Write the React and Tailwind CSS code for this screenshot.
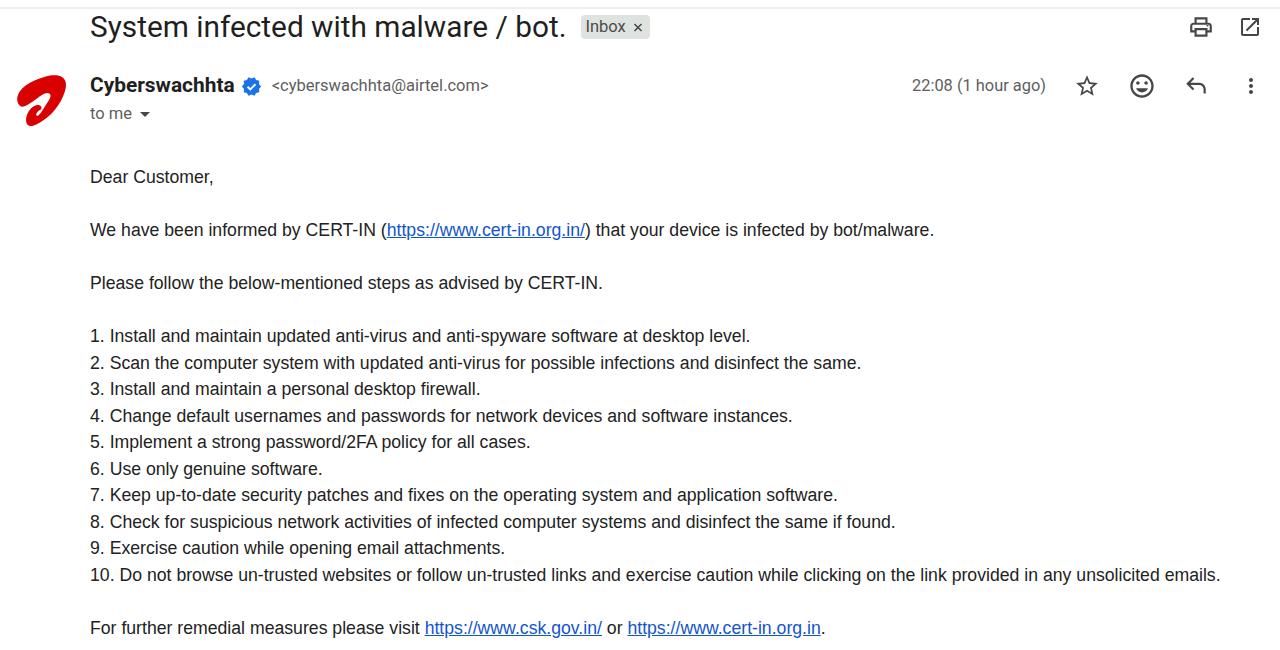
import React from "react";

const STEPS = [
  "1. Install and maintain updated anti-virus and anti-spyware software at desktop level.",
  "2. Scan the computer system with updated anti-virus for possible infections and disinfect the same.",
  "3. Install and maintain a personal desktop firewall.",
  "4. Change default usernames and passwords for network devices and software instances.",
  "5. Implement a strong password/2FA policy for all cases.",
  "6. Use only genuine software.",
  "7. Keep up-to-date security patches and fixes on the operating system and application software.",
  "8. Check for suspicious network activities of infected computer systems and disinfect the same if found.",
  "9. Exercise caution while opening email attachments.",
  "10. Do not browse un-trusted websites or follow un-trusted links and exercise caution while clicking on the link provided in any unsolicited emails.",
];

// material icon paths, same ones gmail draws
const ICONS = {
  print:
    "M19 8h-1V3H6v5H5c-1.66 0-3 1.34-3 3v6h4v4h12v-4h4v-6c0-1.66-1.34-3-3-3zM8 5h8v3H8V5zm8 14H8v-4h8v4zm4-4h-2v-2H6v2H4v-4c0-.55.45-1 1-1h14c.55 0 1 .45 1 1v4zm-2-3.500a1 1 0 1 1 0-2 1 1 0 0 1 0 2z",
  open: "M19 19H5V5h7V3H5c-1.11 0-2 .9-2 2v14c0 1.1.89 2 2 2h14c1.1 0 2-.9 2-2v-7h-2v7zM14 3v2h3.590l-9.830 9.830 1.410 1.410L19 6.410V10h2V3h-7z",
  star: "M22 9.240l-7.190-.62L12 2 9.190 8.630 2 9.240l5.460 4.730L5.820 21 12 17.270 18.180 21l-1.630-7.030L22 9.240zM12 15.400l-3.760 2.270 1-4.280-3.320-2.880 4.380-.38L12 6.100l1.710 4.040 4.380.38-3.320 2.880 1 4.280L12 15.400z",
  mood: "M11.990 2C6.470 2 2 6.480 2 12s4.470 10 9.990 10C17.520 22 22 17.520 22 12S17.520 2 11.990 2zM12 20c-4.420 0-8-3.580-8-8s3.580-8 8-8 8 3.580 8 8-3.580 8-8 8zm3.500-9c.83 0 1.500-.67 1.500-1.500S16.330 8 15.500 8 14 8.670 14 9.500s.67 1.500 1.500 1.500zm-7 0c.83 0 1.500-.67 1.500-1.500S9.330 8 8.500 8 7 8.670 7 9.500 7.670 11 8.500 11zm3.500 6.500c2.330 0 4.310-1.460 5.110-3.500H6.890c.8 2.040 2.780 3.500 5.110 3.500z",
  reply: "M21 19v-4c0-3.310-2.690-6-6-6H6.830l3.590-3.590L9 4 3 10l6 6 1.410-1.410L6.830 11H15c2.210 0 4 1.790 4 4v4h2z",
  more: "M12 8c1.100 0 2-.9 2-2s-.9-2-2-2-2 .9-2 2 .9 2 2 2zm0 2c-1.100 0-2 .9-2 2s.9 2 2 2 2-.9 2-2-.9-2-2-2zm0 6c-1.100 0-2 .9-2 2s.9 2 2 2 2-.9 2-2-.9-2-2-2z",
};

function Icon({ name, size = 24 }) {
  return (
    <svg width={size} height={size} viewBox="0 0 24 24" fill="currentColor">
      <path d={ICONS[name]} />
    </svg>
  );
}

function VerifiedBadge() {
  return (
    <svg width="21" height="21" viewBox="0 0 24 24">
      <path
        d="M23 12l-2.440-2.790.34-3.690-3.610-.82-1.890-3.200L12 2.960 8.600 1.500 6.710 4.690 3.100 5.500l.34 3.700L1 12l2.440 2.790-.34 3.700 3.610.82L8.600 22.500l3.400-1.470 3.400 1.460 1.890-3.190 3.610-.82-.34-3.690L23 12z"
        fill="#1a73e8"
      />
      <path d="M7.500 12.300l3.100 3.100 6-6" fill="none" stroke="#ffffff" strokeWidth="2.200" />
    </svg>
  );
}

function AirtelLogo() {
  return (
    <svg width="60" height="56" viewBox="0 0 180 168">
      <path
        d="M22 76C26 50 60 26 105 14C137 6 164 8 168 35C170 62 144 110 114 134C94 151 72 162 62 162C50 162 45 148 50 132C55 114 70 100 83 99C93 99 97 106 93 112C85 117 77 124 79 130C83 136 94 122 104 104C114 90 126 74 120 66C110 58 96 68 80 80C62 92 48 104 36 104C25 102 20 88 22 76Z"
        fill="#d90000"
      />
    </svg>
  );
}

function IconSlot({ children }) {
  return <span className="flex w-[54.500px] justify-center text-[#444746]">{children}</span>;
}

export default function App() {
  return (
    <div className="h-[650px] w-[1280px] overflow-hidden bg-white font-['Liberation_Sans',sans-serif] text-[#222222]">
      <div className="h-[9px] border-b-2 border-[#eeeeee]" />

      {/* subject */}
      <div className="flex h-[36px] items-center pl-[90px] pr-[18px]">
        <h1 className="font-['Roboto',sans-serif] text-[29.800px] leading-[36px] font-normal text-[#1f1f1f]">
          System infected with malware / bot.
        </h1>
        <span className="ml-[14px] flex h-[24px] items-center gap-[5px] rounded-[4px] bg-[#dfe3e0] px-[5px] font-['Roboto',sans-serif] text-[16.500px] text-[#4a4c4b]">
          Inbox
          <svg width="14" height="14" viewBox="0 0 14 14" stroke="#444746" strokeWidth="1.500">
            <path d="M3.500 4l7 7M10.500 4l-7 7" />
          </svg>
        </span>
        <div className="ml-auto flex items-center gap-[24px] text-[#444746]">
          <Icon name="print" size={26} />
          <Icon name="open" />
        </div>
      </div>

      {/* sender */}
      <div className="mt-[26px] flex h-[72px] items-start">
        <div className="ml-[10px] mt-[1px] w-[80px]">
          <AirtelLogo />
        </div>
        <div className="flex-1">
          <div className="flex h-[30px] items-center">
            <span className="font-['Roboto',sans-serif] text-[20.900px] font-bold text-[#1f1f1f]">Cyberswachhta</span>
            <span className="ml-[6px]">
              <VerifiedBadge />
            </span>
            <span className="ml-[10px] font-['Roboto',sans-serif] text-[16.500px] text-[#5e5e5e]">
              &lt;cyberswachhta@airtel.com&gt;
            </span>
          </div>
          <div className="mt-[2px] flex h-[22px] items-center font-['Roboto',sans-serif] text-[16.500px] text-[#5e5e5e]">
            to me
            <span className="ml-[8px] h-0 w-0 border-x-[5px] border-t-[5px] border-x-transparent border-t-[#444746]" />
          </div>
        </div>
        <div className="flex h-[30px] items-center pr-[2px]">
          <span className="mr-[14px] font-['Roboto',sans-serif] text-[16.400px] text-[#5e5e5e]">22:08 (1 hour ago)</span>
          <IconSlot><Icon name="star" size={26} /></IconSlot>
          <IconSlot><Icon name="mood" size={28} /></IconSlot>
          <IconSlot><Icon name="reply" size={26} /></IconSlot>
          <IconSlot><Icon name="more" /></IconSlot>
        </div>
      </div>

      {/* body */}
      <div className="mt-[21px] pl-[90px] text-[17.670px] leading-[26.500px]">
        <p>Dear Customer,</p>
        <p className="mt-[26.500px]">
          We have been informed by CERT-IN (
          <a href="#" className="text-[#1155cc] underline">https://www.cert-in.org.in/</a>
          ) that your device is infected by bot/malware.
        </p>
        <p className="mt-[26.500px]">Please follow the below-mentioned steps as advised by CERT-IN.</p>
        <ol className="mt-[26.500px]">
          {STEPS.map((step) => (
            <li key={step} className="whitespace-nowrap">{step}</li>
          ))}
        </ol>
        <p className="mt-[26.500px]">
          For further remedial measures please visit{" "}
          <a href="#" className="text-[#1155cc] underline">https://www.csk.gov.in/</a> or{" "}
          <a href="#" className="text-[#1155cc] underline">https://www.cert-in.org.in</a>.
        </p>
      </div>
    </div>
  );
}
